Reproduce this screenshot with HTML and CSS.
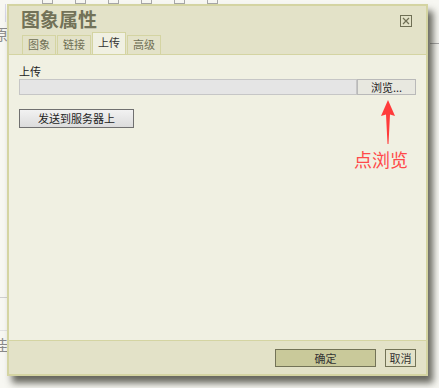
FILE: index.html
```html
<!DOCTYPE html>
<html lang="zh">
<head>
<meta charset="utf-8">
<link rel="stylesheet" href="styles.css">
</head>
<body>
<div class="backdrop">
  <div class="bg-toolbar">
    <span class="bg-ico"></span><span class="bg-ico"></span><span class="bg-ico"></span><span class="bg-ico"></span><span class="bg-ico"></span><span class="bg-ico"></span>
  </div>
  <span class="bg-char c1">原</span>
  <span class="bg-char c2">佳</span>
  <span class="bg-line l1"></span>
  <span class="bg-line l2"></span>
  <span class="bg-line l3"></span>
  <span class="bg-line r1"></span>
</div>
<div class="dialog">
  <div class="titlebar">
    <div class="title-row">
      <h1 class="title">图象属性</h1>
      <span class="close">
        <svg width="12" height="12" viewBox="0 0 12 12"><rect x="0.5" y="0.5" width="11" height="11" fill="none" stroke="#6f6f55"/><path d="M3 3L9 9M9 3L3 9" stroke="#6f6f55" stroke-width="1.2"/></svg>
      </span>
    </div>
    <div class="tabs">
      <span class="tab">图象</span>
      <span class="tab">链接</span>
      <span class="tab active">上传</span>
      <span class="tab">高级</span>
    </div>
  </div>
  <div class="content">
    <div class="label">上传</div>
    <div class="file-row">
      <div class="file-input"></div>
      <div class="browse">浏览...</div>
    </div>
    <div class="send">发送到服务器上</div>
    <svg class="arrow" width="20" height="46" viewBox="0 0 20 46"><path d="M10 0L17 16L12 14.5L10.5 44L9.5 44L8 14.5L3 16Z" fill="#ff3b3b"/></svg>
    <div class="note">点浏览</div>
  </div>
  <div class="footer">
    <span class="btn ok">确定</span>
    <span class="btn cancel">取消</span>
  </div>
</div>
</body>
</html>
```

FILE: styles.css
```css
html, body {
  margin: 0;
  padding: 0;
}
body {
  width: 439px;
  height: 388px;
  overflow: hidden;
  background: #f7f7f2;
  position: relative;
  font-family: "Noto Sans CJK SC", "Noto Sans", sans-serif;
  padding: 4px 0 0 7px;
  box-sizing: border-box;
}
.backdrop {
  position: absolute;
  inset: 0;
}
.bg-toolbar {
  height: 4px;
  display: flex;
  gap: 22px;
  padding-left: 42px;
}
.bg-ico {
  width: 11px;
  height: 4px;
  border: 1px solid #a8a8a8;
  border-top: none;
  box-sizing: border-box;
}
.bg-char {
  position: absolute;
  left: -7px;
  font-size: 15px;
  color: #8a8a8a;
  line-height: 1;
}
.c1 { top: 26px; }
.c2 { top: 337px; }
.bg-line {
  position: absolute;
  left: 0;
  width: 7px;
  height: 1px;
  background: #cfcfcf;
}
.l1 { top: 4px; height: 18px; width: 1px; left: 5px; background: #d8d8e8; }
.l2 { top: 297px; }
.l3 { top: 330px; background: #e2e2e2; }
.r1 { top: 43px; left: 430px; width: 9px; background: #a8a8a8; }
.dialog {
  position: relative;
  width: 421px;
  height: 372px;
  box-sizing: border-box;
  border: 2px solid #d4d4a2;
  background: #f0f0e2;
  display: flex;
  flex-direction: column;
  box-shadow: 5px 7px 7px rgba(40, 40, 30, 0.7);
}
.titlebar {
  background: #e3e2c8;
  height: 49px;
  box-sizing: border-box;
  border-bottom: 1px solid #d4d4a2;
  display: flex;
  flex-direction: column;
}
.title-row {
  display: flex;
  justify-content: space-between;
  align-items: flex-start;
  height: 27px;
  padding: 0 14px 0 12px;
}
.title {
  margin: 0;
  font-size: 19px;
  font-weight: bold;
  line-height: 25px;
  color: #727258;
}
.close {
  margin-top: 9px;
  width: 12px;
  height: 12px;
  display: block;
}
.close svg { display: block; }
.tabs {
  display: flex;
  align-items: flex-end;
  padding-left: 13px;
  gap: 1px;
  height: 21px;
  margin-bottom: -1px;
}
.tab {
  width: 34px;
  height: 19px;
  box-sizing: border-box;
  text-align: center;
  font-size: 11px;
  line-height: 17px;
  color: #6f6f55;
  border: 1px solid #d4d4a2;
  border-bottom: none;
  background: #e3e2c8;
}
.tab.active {
  height: 22px;
  background: #f0f0e2;
  color: #333;
  line-height: 19px;
}
.content {
  flex: 1;
  position: relative;
  padding: 9px 10px 0 10px;
}
.label {
  font-size: 11px;
  line-height: 14px;
  color: #222;
  height: 15px;
}
.file-row {
  display: flex;
  height: 16px;
}
.file-input {
  flex: 1;
  background: #e5e5e5;
  border: 1px solid #c6c6c6;
  box-sizing: border-box;
}
.browse {
  width: 59px;
  box-sizing: border-box;
  border: 1px solid #b9b9b9;
  background: #e8e8e0;
  font-size: 11px;
  line-height: 14px;
  text-align: center;
  color: #222;
}
.send {
  margin-top: 14px;
  width: 115px;
  height: 19px;
  box-sizing: border-box;
  border: 1px solid #707070;
  background: linear-gradient(#f2f2f2, #dcdcdc);
  font-size: 11px;
  line-height: 17px;
  text-align: center;
  color: #222;
}
.arrow {
  position: absolute;
  left: 369px;
  top: 45px;
}
.note {
  position: absolute;
  left: 345px;
  top: 93px;
  font-size: 18px;
  line-height: 22px;
  color: #ff4a4a;
}
.footer {
  height: 34px;
  box-sizing: border-box;
  border-top: 1px solid #d4d4a2;
  background: #e3e2c8;
  display: flex;
  justify-content: flex-end;
  align-items: flex-start;
  padding: 8px 10px 0 0;
  gap: 9px;
}
.btn {
  height: 18px;
  box-sizing: border-box;
  border: 1px solid #737357;
  font-size: 11px;
  line-height: 16px;
  text-align: center;
  color: #333;
}
.ok {
  width: 101px;
  background: #c9c99a;
}
.cancel {
  width: 31px;
  background: #e3e2c8;
}
```
